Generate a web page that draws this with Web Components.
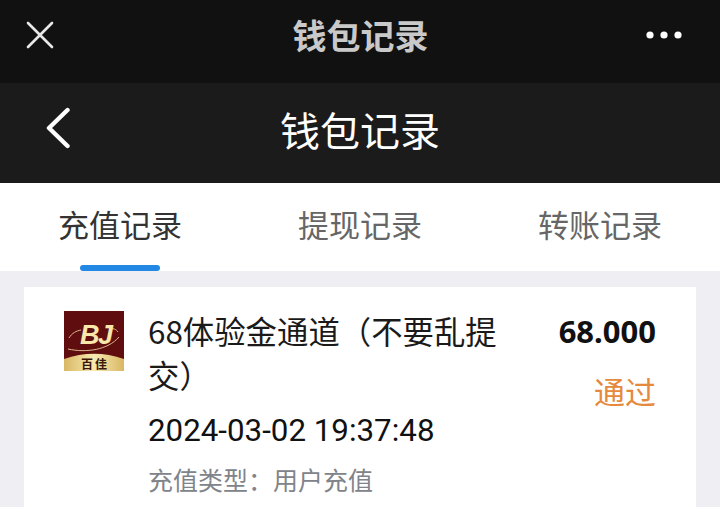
<!DOCTYPE html>
<html lang="zh">
<head>
<meta charset="utf-8">
<style>
  html, body { margin: 0; height: 100%; overflow: hidden; }
  body { background: #eeeef3; font-family: "Noto Sans CJK SC", Roboto, sans-serif; }
</style>
</head>
<body>
<wx-bar title="钱包记录"></wx-bar>
<page-header title="钱包记录"></page-header>
<record-tabs>
  <tab-item active>充值记录</tab-item>
  <tab-item>提现记录</tab-item>
  <tab-item>转账记录</tab-item>
</record-tabs>
<record-list>
  <record-card amount="68.000" status="通过" time="2024-03-02 19:37:48" kind="充值类型：用户充值">68体验金通道（不要乱提交）</record-card>
</record-list>

<script>
// Outer in-app browser bar
class WxBar extends HTMLElement {
  constructor() {
    super();
    this.attachShadow({ mode: 'open' });
  }
  connectedCallback() {
    this.shadowRoot.innerHTML = `
      <style>
        :host { display: grid; grid-template-columns: 1fr auto 1fr; align-items: center; height: 83px; padding: 0 24px 14px 24px; box-sizing: border-box; background: #111; }
        .title { font-size: 34px; line-height: 44px; font-weight: 700; color: #c9c9c9; padding-left: 1px; }
        svg { display: block; }
        .more { justify-self: end; margin: 0 14px 0 0; }
      </style>
      <svg width="32" height="32" viewBox="0 0 32 32" fill="none" stroke="#e8e8e8" stroke-width="2.6" stroke-linecap="round"><path d="M4 4 28 28M28 4 4 28"/></svg>
      <span class="title">${this.getAttribute('title')}</span>
      <svg class="more" width="36" height="32" viewBox="0 0 36 32" fill="#fff"><circle cx="4" cy="16" r="3.6"/><circle cx="18" cy="16" r="3.6"/><circle cx="32" cy="16" r="3.6"/></svg>
    `;
  }
}

// Page header with back arrow
class PageHeader extends HTMLElement {
  constructor() {
    super();
    this.attachShadow({ mode: 'open' });
  }
  connectedCallback() {
    this.shadowRoot.innerHTML = `
      <style>
        :host { display: flex; align-items: center; justify-content: center; position: relative; height: 100px; padding-bottom: 8px; box-sizing: border-box; background: #1b1b1b; }
        .title { font-size: 40px; line-height: 52px; font-weight: 400; color: #fff; }
        svg { position: absolute; left: 46px; top: 24px; }
      </style>
      <svg width="24" height="42" viewBox="0 0 24 42" fill="none" stroke="#fff" stroke-width="4.4" stroke-linecap="round" stroke-linejoin="round"><path d="M21.5 3 3 21 21.5 39"/></svg>
      <span class="title">${this.getAttribute('title')}</span>
    `;
  }
}

class RecordTabs extends HTMLElement {
  constructor() {
    super();
    this.attachShadow({ mode: 'open' });
  }
  connectedCallback() {
    this.shadowRoot.innerHTML = `
      <style>
        :host { display: grid; grid-template-columns: repeat(3, 1fr); height: 88px; background: #fff; }
      </style>
      <slot></slot>
    `;
  }
}

class TabItem extends HTMLElement {
  constructor() {
    super();
    this.attachShadow({ mode: 'open' });
  }
  connectedCallback() {
    this.shadowRoot.innerHTML = `
      <style>
        :host { display: flex; flex-direction: column; align-items: center; justify-content: space-between; font-size: 31px; line-height: 42px; color: #666; padding-top: 20px; box-sizing: border-box; }
        :host([active]) { color: #333; }
        .line { width: 80px; height: 6px; border-radius: 3px; background: transparent; }
        :host([active]) .line { background: #2288e4; }
      </style>
      <span><slot></slot></span>
      <div class="line"></div>
    `;
  }
}

class RecordList extends HTMLElement {
  constructor() {
    super();
    this.attachShadow({ mode: 'open' });
  }
  connectedCallback() {
    this.shadowRoot.innerHTML = `
      <style>
        :host { display: block; padding: 16px 24px 0; }
      </style>
      <slot></slot>
    `;
  }
}

class BrandLogo extends HTMLElement {
  constructor() {
    super();
    this.attachShadow({ mode: 'open' });
  }
  connectedCallback() {
    this.shadowRoot.innerHTML = `
      <style>
        :host { display: block; position: relative; width: 60px; height: 60px; background: #5f0d0f; overflow: hidden; }
        svg { position: absolute; left: 0; top: 0; }
        .mark { position: absolute; left: 16px; top: 8px; font: italic 700 27px/32px "Liberation Sans", sans-serif; color: #f8e6ab; letter-spacing: -1.5px; }
        .tag { position: absolute; left: 0; right: 0; bottom: 0; color: #3a1508; font: 700 12px/15px "Noto Sans CJK SC", sans-serif; text-align: center; letter-spacing: 2px; padding-left: 2px; }
      </style>
      <svg width="60" height="60" viewBox="0 0 60 60" fill="none">
        <path d="M5 27C8 22 12 20 17 19M45 18C49 17 52 18 54 21M4 38C22 42 44 39 55 26" stroke="#d9b58a" stroke-width="1"/>
        <path d="M0 48C20 41 40 41 60 48V60H0Z" fill="url(#band)"/>
        <defs><linearGradient id="band"><stop offset="0" stop-color="#d9b765"/><stop offset=".5" stop-color="#f8eab0"/><stop offset="1" stop-color="#d9b765"/></linearGradient></defs>
      </svg>
      <span class="mark">BJ</span>
      <span class="tag">百佳</span>
    `;
  }
}
customElements.define('brand-logo', BrandLogo);

class RecordCard extends HTMLElement {
  constructor() {
    super();
    this.attachShadow({ mode: 'open' });
  }
  connectedCallback() {
    this.shadowRoot.innerHTML = `
      <style>
        :host { display: grid; grid-template-columns: 60px 1fr auto; column-gap: 24px; align-items: start; background: #fff; padding: 24px 40px 20px; }
        .name { font-size: 31.4px; line-height: 44px; color: #1a1a1a; width: 356px; margin-top: -2px; }
        .time { font: 400 31.3px/44px Roboto, sans-serif; color: #111; margin-top: 12px; }
        .kind { font-size: 25px; line-height: 34px; color: #80848a; margin-top: 9px; }
        .side { display: flex; flex-direction: column; align-items: flex-end; margin-left: -40px; }
        .amount { font: 700 31px/44px "Noto Sans", sans-serif; color: #111; margin-top: -2px; }
        .status { font-size: 31px; line-height: 40px; color: #e58a3c; margin-top: 18px; }
      </style>
      <brand-logo></brand-logo>
      <div>
        <div class="name"><slot></slot></div>
        <div class="time">${this.getAttribute('time')}</div>
        <div class="kind">${this.getAttribute('kind')}</div>
      </div>
      <div class="side">
        <div class="amount">${this.getAttribute('amount')}</div>
        <div class="status">${this.getAttribute('status')}</div>
      </div>
    `;
  }
}

customElements.define('wx-bar', WxBar);
customElements.define('page-header', PageHeader);
customElements.define('record-tabs', RecordTabs);
customElements.define('tab-item', TabItem);
customElements.define('record-list', RecordList);
customElements.define('record-card', RecordCard);
</script>
</body>
</html>
